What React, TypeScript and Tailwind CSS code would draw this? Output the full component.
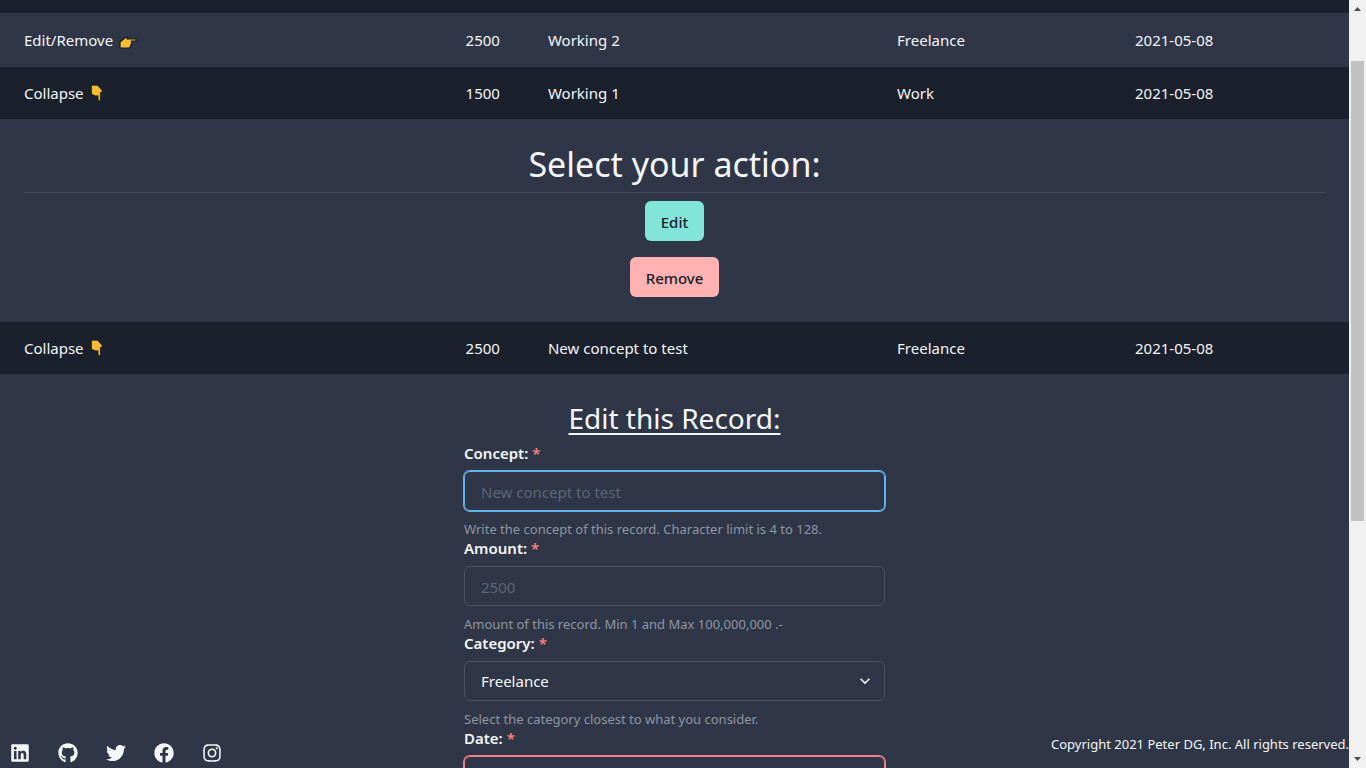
import { useId, useState } from "react";
import type { ReactNode } from "react";
import { FaFacebook, FaGithub, FaInstagram, FaLinkedin, FaTwitter } from "react-icons/fa";

interface RecordRow {
  amount: string;
  concept: string;
  category: string;
  date: string;
}

function HandRight() {
  return (
    <svg viewBox="0 0 18 14" className="mt-1 ml-1.5 inline-block h-3.5 w-[18px]" aria-hidden="true">
      <path
        d="M1 13V7L6.6 2.4L8.6 2.4L8 4H16.6L17.2 5L16.6 6.2H12.4L12.8 8L12 10L11.2 12L10 13Z"
        fill="#f6bd33"
        stroke="#16181d"
        strokeWidth="1.2"
        strokeLinejoin="round"
      />
    </svg>
  );
}

function HandDown() {
  return (
    <svg viewBox="0 0 14 18" className="ml-1.5 inline-block h-[18px] w-3.5" aria-hidden="true">
      <path
        d="M1.4 1.2H7.6L12.2 6.6L11.8 8.6L10.4 8.4V16L9.4 16.8L8 16V11.6L6.2 12L4.4 11.4L2.4 10.6L1.4 9.4Z"
        fill="#f6bd33"
        stroke="#16181d"
        strokeWidth="0.8"
        strokeLinejoin="round"
      />
    </svg>
  );
}

function Row({ record, open, onToggle }: { record: RecordRow; open: boolean; onToggle: () => void }) {
  return (
    <tr className={open ? "h-[52px] bg-[#1a202c]" : "h-[54px] bg-[#2e3648]"}>
      <td className="px-6">
        <button type="button" className="flex items-center" aria-expanded={open} onClick={onToggle}>
          {open ? "Collapse" : "Edit/Remove"}
          {open ? <HandDown /> : <HandRight />}
        </button>
      </td>
      <td className="px-6 text-right">{record.amount}</td>
      <td className="px-6">{record.concept}</td>
      <td className="px-6">{record.category}</td>
      <td className="px-6">{record.date}</td>
    </tr>
  );
}

function Panel({ children }: { children: ReactNode }) {
  return (
    <tr className="bg-[#2e3648]">
      <td colSpan={5} className="px-6 pt-6 pb-[25px]">
        {children}
      </td>
    </tr>
  );
}

function Field({ id, label, help, children }: { id: string; label: string; help: string; children: ReactNode }) {
  return (
    <div className="flex flex-col">
      <label htmlFor={id} className="mb-[7px] text-[15px] leading-[22px] font-semibold">
        {label} <span className="text-[#fc8181]">*</span>
      </label>
      {children}
      <p className="mt-2.5 text-[13px] leading-4 text-[#8f97a3]">{help}</p>
    </div>
  );
}

function ActionPanel() {
  return (
    <div className="flex flex-col items-center">
      <h2 className="w-full border-b border-[#434c5c] pb-1.5 text-center text-[34px] leading-[43px]">Select your action:</h2>
      <button type="button" className="mt-2 h-10 rounded-md bg-[#81e6d9] px-4 pt-0.5 text-[15px] font-medium text-[#1a202c]">
        Edit
      </button>
      <button type="button" className="mt-4 h-10 rounded-md bg-[#feb2b2] px-4 pt-0.5 text-[15px] font-medium text-[#1a202c]">
        Remove
      </button>
    </div>
  );
}

function EditForm() {
  const id = useId();
  return (
    <form className="mx-auto flex max-w-[421px] flex-col">
      <h3 className="mb-1 text-center text-[28px] leading-10 underline decoration-2 underline-offset-4">Edit this Record:</h3>
      <Field id={`${id}-concept`} label="Concept:" help="Write the concept of this record. Character limit is 4 to 128.">
        <input
          id={`${id}-concept`}
          type="text"
          placeholder="New concept to test"
          className="h-10 rounded-md border border-[#63b3ed] bg-transparent px-4 pt-0.5 ring-1 ring-[#63b3ed] outline-none placeholder:text-[#5d6675]"
        />
      </Field>
      <Field id={`${id}-amount`} label="Amount:" help="Amount of this record. Min 1 and Max 100,000,000 .-">
        <input
          id={`${id}-amount`}
          type="text"
          inputMode="numeric"
          placeholder="2500"
          className="h-10 rounded-md border border-[#4a5263] bg-transparent px-4 pt-0.5 outline-none placeholder:text-[#5d6675]"
        />
      </Field>
      <Field id={`${id}-category`} label="Category:" help="Select the category closest to what you consider.">
        <div className="relative">
          <select
            id={`${id}-category`}
            className="block h-10 w-full appearance-none rounded-md border border-[#4a5263] bg-[#2e3648] px-4 outline-none"
          >
            <option>Freelance</option>
            <option>Work</option>
          </select>
          <svg viewBox="0 0 24 24" className="pointer-events-none absolute top-2.5 right-2.5 h-5 w-5" aria-hidden="true">
            <path fill="#f5f6f8" d="M16.59 8.59L12 13.17 7.41 8.59 6 10l6 6 6-6z" />
          </svg>
        </div>
      </Field>
      <Field id={`${id}-date`} label="Date:" help="Select the date of this record.">
        <input
          id={`${id}-date`}
          type="date"
          className="h-10 rounded-md border border-[#f08484] bg-transparent px-4 pt-0.5 ring-1 ring-[#f08484] outline-none"
        />
      </Field>
    </form>
  );
}

function Footer() {
  const links = [
    { name: "LinkedIn", Icon: FaLinkedin },
    { name: "GitHub", Icon: FaGithub },
    { name: "Twitter", Icon: FaTwitter },
    { name: "Facebook", Icon: FaFacebook },
    { name: "Instagram", Icon: FaInstagram },
  ];
  return (
    <footer className="pointer-events-none absolute inset-x-0 bottom-0 flex items-start justify-between">
      <nav className="pointer-events-auto flex gap-2">
        {links.map(({ name, Icon }) => (
          <a key={name} href="#" aria-label={name} className="flex h-[30px] w-10 items-center justify-center">
            <Icon className="h-5 w-5" />
          </a>
        ))}
      </nav>
      <p className="text-[13px] leading-3">Copyright 2021 Peter DG, Inc. All rights reserved.</p>
    </footer>
  );
}

function ScrollBar() {
  return (
    <div className="flex w-[17px] shrink-0 flex-col items-center bg-[#f1f1f1]" aria-hidden="true">
      <svg viewBox="0 0 17 17" className="h-[17px] w-[17px] shrink-0">
        <path d="M5 11L8.5 7L12 11Z" fill="#505050" />
      </svg>
      <div className="flex w-full grow flex-col px-0.5">
        <div className="grow-[44]" />
        <div className="grow-[460] bg-[#c1c1c1]" />
        <div className="grow-[230]" />
      </div>
      <svg viewBox="0 0 17 17" className="h-[17px] w-[17px] shrink-0">
        <path d="M5 6L8.5 10L12 6Z" fill="#505050" />
      </svg>
    </div>
  );
}

const records: (RecordRow & { panel: "action" | "form" })[] = [
  { amount: "2500", concept: "Working 2", category: "Freelance", date: "2021-05-08", panel: "action" },
  { amount: "1500", concept: "Working 1", category: "Work", date: "2021-05-08", panel: "action" },
  { amount: "2500", concept: "New concept to test", category: "Freelance", date: "2021-05-08", panel: "form" },
];

export default function App() {
  const [open, setOpen] = useState<boolean[]>([false, true, true]);
  const toggle = (index: number) => setOpen((state) => state.map((value, i) => (i === index ? !value : value)));

  return (
    <div className="flex h-screen overflow-hidden bg-[#2e3648] font-['Noto_Sans',sans-serif] text-[15px] text-[#f5f6f8]">
      <main className="relative min-w-0 grow overflow-hidden">
        <table className="w-full table-fixed border-collapse text-left">
          <colgroup>
            <col className="w-[26%]" />
            <col className="w-[12.84%]" />
            <col className="w-[25.88%]" />
            <col className="w-[17.64%]" />
            <col className="w-[17.64%]" />
          </colgroup>
          <tbody>
            <tr className="h-[13px] bg-[#1a202c]">
              <td colSpan={5} />
            </tr>
            {records.map((record, index) => [
              <Row key={`row-${index}`} record={record} open={open[index]} onToggle={() => toggle(index)} />,
              open[index] && <Panel key={`panel-${index}`}>{record.panel === "form" ? <EditForm /> : <ActionPanel />}</Panel>,
            ])}
          </tbody>
        </table>
        <Footer />
      </main>
      <ScrollBar />
    </div>
  );
}
